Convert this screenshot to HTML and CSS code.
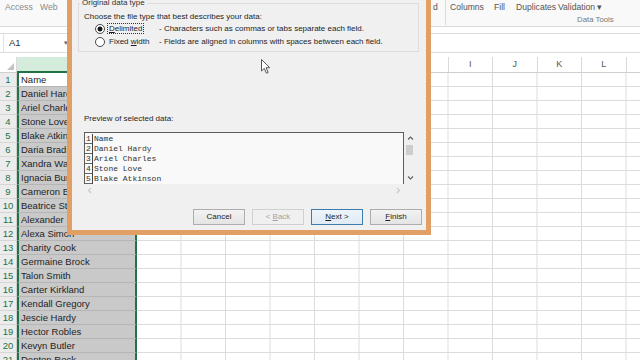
FILE: index.html
```html
<!DOCTYPE html>
<html lang="en">
<head>
  <meta charset="UTF-8" />
  <meta name="viewport" content="width=device-width, initial-scale=1.0" />
  <title>Text Import Wizard</title>
  <link rel="stylesheet" href="styles.css">
</head>
<body>
  <div class="excel">
    <div class="ribbon">
      <div class="rb-left">
        <span class="rb-access">Access</span>
        <span>Web</span>
      </div>
      <div class="rb-right">
        <span class="rb-cut">d</span>
        <div class="rb-group">
          <div class="rb-cmds">
            <span class="cmd-columns">Columns</span>
            <span class="cmd-fill">Fill</span>
            <span class="cmd-dup">Duplicates</span>
            <span>Validation ▾</span>
          </div>
          <div class="rb-label">Data Tools</div>
        </div>
      </div>
    </div>

    <div class="fbar">
      <div class="namebox">A1<span class="nb-arrow">▾</span></div>
    </div>

    <div class="colheads">
      <div class="corner"><span class="tri"></span></div>
      <div class="ch ch-a">A</div>
      <div class="ch">B</div>
      <div class="ch">C</div>
      <div class="ch">D</div>
      <div class="ch">E</div>
      <div class="ch">F</div>
      <div class="ch">G</div>
      <div class="ch">H</div>
      <div class="ch">I</div>
      <div class="ch">J</div>
      <div class="ch">K</div>
      <div class="ch">L</div>
      <div class="ch"></div>
    </div>

    <div class="rows">
      <div class="row"><div class="rn">1</div><div class="ca active">Name</div><div class="rest"></div></div>
      <div class="row"><div class="rn">2</div><div class="ca">Daniel Hardy</div><div class="rest"></div></div>
      <div class="row"><div class="rn">3</div><div class="ca">Ariel Charles</div><div class="rest"></div></div>
      <div class="row"><div class="rn">4</div><div class="ca">Stone Love</div><div class="rest"></div></div>
      <div class="row"><div class="rn">5</div><div class="ca">Blake Atkinson</div><div class="rest"></div></div>
      <div class="row"><div class="rn">6</div><div class="ca">Daria Bradshaw</div><div class="rest"></div></div>
      <div class="row"><div class="rn">7</div><div class="ca">Xandra Watkins</div><div class="rest"></div></div>
      <div class="row"><div class="rn">8</div><div class="ca">Ignacia Burch</div><div class="rest"></div></div>
      <div class="row"><div class="rn">9</div><div class="ca">Cameron Bowen</div><div class="rest"></div></div>
      <div class="row"><div class="rn">10</div><div class="ca">Beatrice Stanton</div><div class="rest"></div></div>
      <div class="row"><div class="rn">11</div><div class="ca">Alexander Summers</div><div class="rest"></div></div>
      <div class="row"><div class="rn">12</div><div class="ca">Alexa Simon</div><div class="rest"></div></div>
      <div class="row"><div class="rn">13</div><div class="ca">Charity Cook</div><div class="rest"></div></div>
      <div class="row"><div class="rn">14</div><div class="ca">Germaine Brock</div><div class="rest"></div></div>
      <div class="row"><div class="rn">15</div><div class="ca">Talon Smith</div><div class="rest"></div></div>
      <div class="row"><div class="rn">16</div><div class="ca">Carter Kirkland</div><div class="rest"></div></div>
      <div class="row"><div class="rn">17</div><div class="ca">Kendall Gregory</div><div class="rest"></div></div>
      <div class="row"><div class="rn">18</div><div class="ca">Jescie Hardy</div><div class="rest"></div></div>
      <div class="row"><div class="rn">19</div><div class="ca">Hector Robles</div><div class="rest"></div></div>
      <div class="row"><div class="rn">20</div><div class="ca">Kevyn Butler</div><div class="rest"></div></div>
      <div class="row"><div class="rn">21</div><div class="ca">Denton Rock</div><div class="rest"></div></div>
    </div>
  </div>

  <div class="dialog">
    <fieldset class="grp">
      <legend>Original data type</legend>
      <div class="grp-intro">Choose the file type that best describes your data:</div>
      <div class="opt">
        <span class="radio checked"></span>
        <span class="opt-name"><span class="focus"><u>D</u>elimited</span></span>
        <span>- Characters such as commas or tabs separate each field.</span>
      </div>
      <div class="opt">
        <span class="radio"></span>
        <span class="opt-name">Fixed <u>w</u>idth</span>
        <span>- Fields are aligned in columns with spaces between each field.</span>
      </div>
    </fieldset>

    <div class="prev-label">Preview of selected data:</div>
    <div class="preview">
      <div class="pv-text">
        <div class="ln"><span class="ln-no">1</span><span class="ln-txt">Name</span></div>
        <div class="ln"><span class="ln-no">2</span><span class="ln-txt">Daniel Hardy</span></div>
        <div class="ln"><span class="ln-no">3</span><span class="ln-txt">Ariel Charles</span></div>
        <div class="ln"><span class="ln-no">4</span><span class="ln-txt">Stone Love</span></div>
        <div class="ln"><span class="ln-no">5</span><span class="ln-txt">Blake Atkinson</span></div>
      </div>
      <div class="vscroll">
        <svg class="sb-btn" width="13" height="12" viewBox="0 0 13 12"><polyline points="4,7.5 6.5,5 9,7.5" fill="none" stroke="#606060" stroke-width="1.1"/></svg>
        <div class="thumb"></div>
        <svg class="sb-btn sb-down" width="13" height="12" viewBox="0 0 13 12"><polyline points="4,4.5 6.5,7 9,4.5" fill="none" stroke="#606060" stroke-width="1.1"/></svg>
      </div>
      <div class="hscroll">
        <svg width="12" height="13" viewBox="0 0 12 13"><polyline points="7,4 4.5,6.5 7,9" fill="none" stroke="#c8c8c8" stroke-width="1.1"/></svg>
        <svg width="12" height="13" viewBox="0 0 12 13"><polyline points="5,4 7.5,6.5 5,9" fill="none" stroke="#c8c8c8" stroke-width="1.1"/></svg>
      </div>
    </div>

    <div class="buttons">
      <div class="btn">Cancel</div>
      <div class="btn disabled">&lt; <u>B</u>ack</div>
      <div class="btn default"><u>N</u>ext &gt;</div>
      <div class="btn"><u>F</u>inish</div>
    </div>
  </div>

  <svg class="cursor" width="11" height="16" viewBox="0 0 11 16">
    <path d="M0.5 0.5 L0.5 12 L3.3 9.4 L5.4 14.2 L7.2 13.4 L5.1 8.7 L8.8 8.7 Z" fill="#fff" stroke="#555" stroke-width="1"/>
  </svg>
</body>
</html>
```

FILE: styles.css
```css
* {
  box-sizing: border-box;
}

body {
  margin: 0;
  width: 640px;
  height: 360px;
  overflow: hidden;
  position: relative;
  background: #fff;
  font-family: 'Liberation Sans', Arial, sans-serif;
  color: #222;
}

/* ribbon */
.ribbon {
  display: flex;
  height: 27px;
  background: #f9f9f9;
  border-bottom: 1px solid #dadada;
  font-size: 8.6px;
  color: #555;
}

.rb-left {
  padding: 2px 0 0 5px;
  line-height: 10px;
  color: #8a8a8a;
}

.rb-access {
  margin-right: 5px;
}

.rb-right {
  margin-left: auto;
  width: 207px;
  display: flex;
}

.rb-cut {
  width: 12px;
  padding-top: 2px;
  line-height: 10px;
}

.rb-group {
  flex: 1;
  height: 25px;
  border-left: 1px solid #dcdcdc;
  padding-left: 4px;
}

.rb-cmds {
  display: flex;
  padding-top: 2px;
  line-height: 10px;
  white-space: nowrap;
}

.cmd-columns {
  width: 44px;
}

.cmd-fill {
  width: 22px;
}

.cmd-dup {
  width: 42px;
}

.rb-label {
  margin: 3px 0 0 127px;
  font-size: 7.8px;
  line-height: 10px;
  color: #777;
}

/* formula bar */
.fbar {
  margin-top: 6px;
  height: 20px;
  border-top: 1px solid #dcdcdc;
  border-bottom: 1px solid #dcdcdc;
}

.namebox {
  position: relative;
  width: 70px;
  height: 18px;
  margin-left: 3px;
  padding-left: 5px;
  border-left: 1px solid #e2e2e2;
  border-right: 1px solid #e2e2e2;
  font-size: 9.5px;
  line-height: 18px;
  color: #333;
}

.nb-arrow {
  position: absolute;
  right: 4px;
  color: #666;
  font-size: 7px;
}

/* column headers */
.colheads {
  display: flex;
  margin-top: 4px;
  height: 16px;
  border-bottom: 1px solid #cfcfcf;
  font-size: 9px;
  line-height: 15px;
  color: #555;
}

.corner {
  width: 17px;
  flex: none;
  position: relative;
  border-right: 1px solid #dadada;
}

.tri {
  position: absolute;
  right: 2px;
  bottom: 2px;
  width: 0;
  height: 0;
  border-left: 7px solid transparent;
  border-bottom: 7px solid #c4c4c4;
}

.ch {
  width: 44.5px;
  flex: none;
  text-align: center;
  border-right: 1px solid #dadada;
}

.ch-a {
  width: 120px;
  background: #d3ecdc;
  color: #217346;
  border-right: 0;
  border-bottom: 2px solid #217346;
  height: 16px;
}

/* rows */
.row {
  display: flex;
  height: 14px;
  font-size: 9.5px;
  line-height: 13px;
}

.rn {
  width: 17px;
  flex: none;
  text-align: center;
  background: #ececec;
  color: #217346;
  border-bottom: 1px solid #d6d6d6;
  border-right: 1px solid #d0d0d0;
}

.ca {
  width: 120px;
  flex: none;
  padding-left: 2px;
  white-space: nowrap;
  overflow: hidden;
  background: #c9c9c9;
  color: #1e1e1e;
  border-left: 2px solid #217346;
  border-right: 2px solid #217346;
  border-bottom: 1px solid #b5b5b5;
}

.ca.active {
  background: #fff;
}

.rest {
  flex: 1;
  border-bottom: 1px solid #dcdcdc;
  background-image: linear-gradient(to left, #dcdcdc 1px, transparent 1px);
  background-size: 44.5px 100%;
}

/* text import dialog */
.dialog {
  position: absolute;
  left: 67px;
  top: 0;
  width: 364px;
  height: 235px;
  background: #f0f0f0;
  border: 5px solid #e29f63;
  border-top: 0;
  font-size: 8px;
  line-height: 10px;
  color: #1e1e1e;
}

.grp {
  margin: -2px 0 0 6px;
  width: 341px;
  border: 1px solid #dcdcdc;
  padding: 4px 0 3px 5px;
  min-width: 0;
}

.grp legend {
  padding: 0 2px;
  margin-left: -4px;
  line-height: 10px;
  color: #333;
}

.opt {
  display: flex;
  align-items: center;
  height: 13px;
}

.radio {
  width: 10px;
  height: 10px;
  margin-left: 11px;
  border: 1px solid #4a4a4a;
  border-radius: 50%;
  background: #fff;
}

.radio.checked {
  background: radial-gradient(circle, #1a1a1a 0, #1a1a1a 2.2px, #fff 2.8px);
}

.opt-name {
  width: 51px;
  margin-left: 3px;
  padding-left: 1px;
}

.focus {
  outline: 1px dotted #333;
  outline-offset: 0;
  padding: 0 1px;
  margin-left: -1px;
}

.prev-label {
  margin: 62px 0 0 12px;
}

.preview {
  margin: 8px 0 0 12px;
  width: 333px;
  height: 65px;
  display: grid;
  grid-template-columns: 320px 13px;
  grid-template-rows: 52px 13px;
}

.pv-text {
  background: #f9f9f9;
  border: 1px solid #5c5c5c;
  border-bottom: 0;
  padding-top: 1px;
  font-family: 'Liberation Mono', 'Courier New', monospace;
  font-size: 8px;
  color: #333;
}

.ln {
  display: flex;
  height: 10px;
  line-height: 10px;
  white-space: pre;
}

.ln-no {
  width: 8px;
  height: 10px;
  flex: none;
  text-align: center;
  border-right: 1px solid #444;
  background-image: linear-gradient(to top, #666 1px, transparent 1px);
}

.ln-txt {
  padding-left: 1px;
}

.vscroll {
  display: flex;
  flex-direction: column;
}

.thumb {
  width: 7px;
  height: 10px;
  margin: 1px 0 0 2px;
  background: #cdcdcd;
}

.sb-down {
  margin-top: auto;
}

.hscroll {
  display: flex;
  justify-content: space-between;
}

.buttons {
  display: flex;
  justify-content: flex-end;
  gap: 7px;
  margin-top: 12px;
  padding-right: 4px;
}

.btn {
  width: 52px;
  height: 16px;
  border: 1px solid #adadad;
  background: linear-gradient(#f3f3f3, #e4e4e4);
  text-align: center;
  line-height: 14px;
  color: #1e1e1e;
}

.btn.disabled {
  color: #a3a3a3;
  border-color: #d0d0d0;
  background: #f0f0f0;
}

.btn.default {
  border-color: #3d7bad;
  background: linear-gradient(#eef5fb, #dfeaf4);
}

.cursor {
  position: absolute;
  left: 261px;
  top: 59px;
}
```
